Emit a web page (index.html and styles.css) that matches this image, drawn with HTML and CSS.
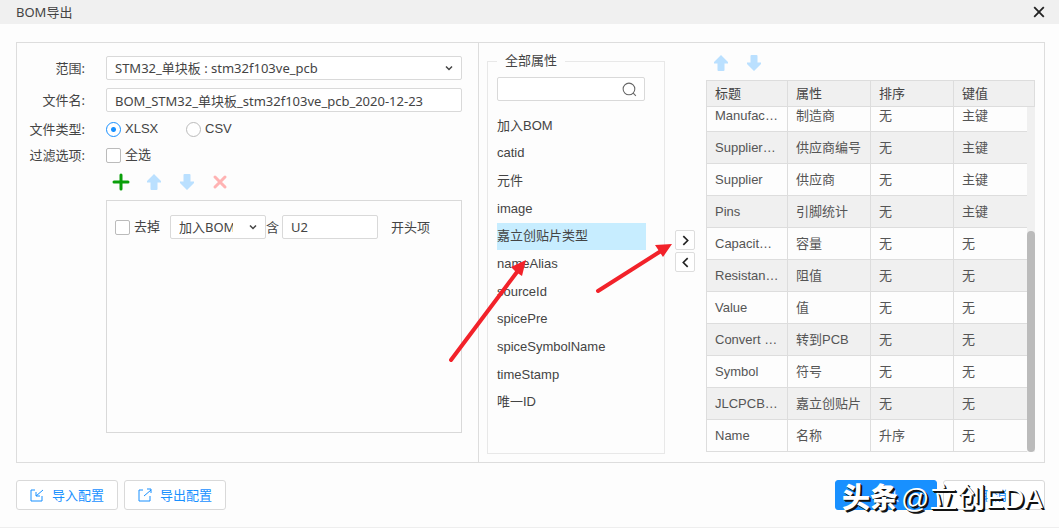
FILE: index.html
```html
<!DOCTYPE html>
<html lang="zh-CN">
<head>
<meta charset="utf-8">
<meta name="viewport" content="width=device-width, initial-scale=1">
<title>BOM导出</title>
<link rel="stylesheet" href="styles.css">
</head>
<body>
<svg class="defs" aria-hidden="true">
  <symbol id="up" viewBox="0 0 16 16"><path d="M8 0 L15 7 V8.500 H11.500 V15 Q11.500 16 10.500 16 H5.500 Q4.500 16 4.500 15 V8.500 H1 V7 Z"/></symbol>
  <symbol id="down" viewBox="0 0 16 16"><path d="M8 16 L15 9 V7.500 H11.500 V1 Q11.500 0 10.500 0 H5.500 Q4.500 0 4.500 1 V7.500 H1 V9 Z"/></symbol>
  <symbol id="chevron" viewBox="0 0 8 8"><path d="M1 2.500 L4 5.500 L7 2.500"/></symbol>
</svg>
<main class="dialog">
  <header class="titlebar">
    <h1 class="title">BOM导出</h1>
    <button class="close" type="button" aria-label="关闭"><svg viewBox="0 0 10 10"><path d="M1 1 L9 9 M9 1 L1 9"/></svg></button>
  </header>

  <div class="panels">
    <section class="panel options">
      <div class="row">
        <label class="label" for="scope">范围:</label>
        <div class="select"><select id="scope"><option>STM32_单块板 : stm32f103ve_pcb</option></select><svg class="chevron"><use href="#chevron"/></svg></div>
      </div>
      <div class="row">
        <label class="label" for="filename">文件名:</label>
        <input class="text" id="filename" type="text" value="BOM_STM32_单块板_stm32f103ve_pcb_2020-12-23">
      </div>
      <div class="row short" role="radiogroup" aria-labelledby="type-label">
        <span class="label" id="type-label">文件类型:</span>
        <div class="choices">
          <label class="choice"><input class="radio" type="radio" name="type" checked>XLSX</label>
          <label class="choice"><input class="radio" type="radio" name="type">CSV</label>
        </div>
      </div>
      <div class="row short">
        <span class="label">过滤选项:</span>
        <label class="choice"><input class="check" type="checkbox">全选</label>
      </div>
      <div class="tools">
        <button class="tool add" type="button" aria-label="添加"><svg viewBox="0 0 18 18"><path d="M9 2 V16 M2 9 H16"/></svg></button>
        <button class="tool move" type="button" aria-label="上移"><svg><use href="#up"/></svg></button>
        <button class="tool move" type="button" aria-label="下移"><svg><use href="#down"/></svg></button>
        <button class="tool remove" type="button" aria-label="删除"><svg viewBox="0 0 18 18"><path d="M4 4 L14 14 M14 4 L4 14"/></svg></button>
      </div>
      <div class="filters">
        <div class="filter">
          <label class="choice"><input class="check" type="checkbox">去掉</label>
          <div class="select field"><select aria-label="属性"><option>加入BOM</option></select><svg class="chevron"><use href="#chevron"/></svg></div>
          <label class="contains" for="prefix">含</label>
          <input class="text prefix" id="prefix" type="text" value="U2">
          <span class="suffix">开头项</span>
        </div>
      </div>
    </section>

    <section class="panel attributes">
      <fieldset class="all">
        <legend>全部属性</legend>
        <div class="search">
          <input class="text" type="search" aria-label="搜索属性">
          <svg viewBox="0 0 16 16"><circle cx="7.500" cy="7.500" r="5.500"/><path d="M11.500 11.500 L14 14"/></svg>
        </div>
        <ul class="list">
          <li>加入BOM</li>
          <li>catid</li>
          <li>元件</li>
          <li>image</li>
          <li class="selected">嘉立创贴片类型</li>
          <li>nameAlias</li>
          <li>sourceId</li>
          <li>spicePre</li>
          <li>spiceSymbolName</li>
          <li>timeStamp</li>
          <li>唯一ID</li>
        </ul>
      </fieldset>

      <div class="transfer">
        <button class="shift" type="button" aria-label="加入"><svg viewBox="0 0 10 10"><path d="M3 1 L7 5 L3 9"/></svg></button>
        <button class="shift" type="button" aria-label="移出"><svg viewBox="0 0 10 10"><path d="M7 1 L3 5 L7 9"/></svg></button>
      </div>

      <div class="chosen">
        <div class="sorting">
          <button class="tool move" type="button" aria-label="上移"><svg><use href="#up"/></svg></button>
          <button class="tool move" type="button" aria-label="下移"><svg><use href="#down"/></svg></button>
        </div>
        <table class="grid head">
          <thead><tr><th>标题</th><th>属性</th><th>排序</th><th>键值</th></tr></thead>
        </table>
        <div class="scroller">
          <table class="grid body">
            <tbody>
              <tr><td>Manufacturer</td><td>制造商</td><td>无</td><td>主键</td></tr>
              <tr><td>SupplierPart</td><td>供应商编号</td><td>无</td><td>主键</td></tr>
              <tr><td>Supplier</td><td>供应商</td><td>无</td><td>主键</td></tr>
              <tr><td>Pins</td><td>引脚统计</td><td>无</td><td>主键</td></tr>
              <tr><td>Capacitance</td><td>容量</td><td>无</td><td>无</td></tr>
              <tr><td>Resistance(Ohm)</td><td>阻值</td><td>无</td><td>无</td></tr>
              <tr><td>Value</td><td>值</td><td>无</td><td>无</td></tr>
              <tr><td>Convert to PCB</td><td>转到PCB</td><td>无</td><td>无</td></tr>
              <tr><td>Symbol</td><td>符号</td><td>无</td><td>无</td></tr>
              <tr><td>JLCPCB Part</td><td>嘉立创贴片</td><td>无</td><td>无</td></tr>
              <tr><td>Name</td><td>名称</td><td>升序</td><td>无</td></tr>
            </tbody>
          </table>
          <div class="track"><div class="thumb"></div></div>
        </div>
      </div>
    </section>
  </div>

  <footer class="actions">
    <button class="button link" type="button"><svg viewBox="0 0 14 14"><path d="M5 2 H1 V13 H12 V8 M13 2 L6 8 M6 4 V8 H10"/></svg>导入配置</button>
    <button class="button link" type="button"><svg viewBox="0 0 14 14"><path d="M5 2 H1 V13 H12 V8 M6 8 L13 2 M9 1 H13 V5"/></svg>导出配置</button>
    <button class="button primary" type="button">确认</button>
    <button class="button link" type="button">取消</button>
  </footer>

  <svg class="pointers" viewBox="0 0 230 130" aria-hidden="true">
    <path class="shaft" d="M11 120 L77 32 M158 51 L221 11"/>
    <path class="tip" d="M86 20 L71 27 L76 32 L82 36 Z M232 4 L215 5 L219 11 L223 17 Z"/>
  </svg>
  <div class="watermark"><strong>头条</strong><span>@立创EDA</span></div>
</main>
</body>
</html>
```
FILE: styles.css
```css
* { box-sizing: border-box; }

body {
  margin: 0;
  background: #fff;
  color: #444;
  font: 13px/20px "Noto Sans", "Noto Sans CJK SC", sans-serif;
}

button, input, select { font: inherit; color: inherit; margin: 0; }
button { padding: 0; cursor: pointer; }
svg { fill: none; stroke: none; }
.defs { position: absolute; width: 0; height: 0; }

.dialog {
  position: relative;
  min-height: 528px;
  background: #fdfdfd;
  border-bottom: 1px solid #eee;
}

.titlebar {
  display: flex;
  align-items: center;
  justify-content: space-between;
  height: 24px;
  padding: 0 14px 0 16px;
  background: #f0f0f0;
}
.title { margin: 0; font-size: 13px; font-weight: 400; }
.close { display: flex; border: 0; background: none; }
.close svg { width: 12px; height: 12px; stroke: #222; stroke-width: 1.5; }

.panels {
  display: grid;
  grid-template-columns: 462fr 565fr;
  margin: 18px 14px 0 16px;
  border: 1px solid #ddd;
}
.panel { min-width: 0; height: 419px; }

.options { padding: 13px 16px 0 0; border-right: 1px solid #ddd; }
.row {
  display: grid;
  grid-template-columns: 68px 1fr;
  column-gap: 21px;
  align-items: center;
  height: 24px;
  margin-bottom: 8px;
}
.row.short { height: 26px; margin: 0; }
.row:nth-child(2) { margin-bottom: 4px; }
.label { text-align: right; white-space: nowrap; }

.text, .select select {
  width: 100%;
  min-width: 0;
  height: 24px;
  padding: 0 8px;
  border: 1px solid #d9d9d9;
  border-radius: 2px;
  background: #fff;
  appearance: none;
  outline: 0;
}
.select { display: grid; align-items: center; }
.select > * { grid-area: 1 / 1; }
.select select { padding-right: 32px; }
.chevron {
  justify-self: end;
  width: 8px;
  height: 8px;
  margin-right: 9px;
  stroke: #444;
  stroke-width: 1.5;
  pointer-events: none;
}

.choices { display: grid; grid-template-columns: 80px 1fr; }
.choice {
  display: flex;
  align-items: center;
  gap: 4px;
  font-family: "Liberation Sans", "Noto Sans CJK SC", sans-serif;
  white-space: nowrap;
}
.radio, .check {
  flex: none;
  width: 15px;
  height: 15px;
  appearance: none;
  background: #fff;
  border: 1px solid #bbb;
}
.radio { border-radius: 50%; }
.radio:checked {
  border-color: #1890ff;
  background: radial-gradient(circle, #1890ff 2px, #fff 3px);
}
.check { border-radius: 2px; }

.tools { display: flex; gap: 15px; margin: 5px 0 0 95px; }
.tool { display: flex; border: 0; background: none; }
.tool svg { width: 18px; height: 18px; }
.move svg { padding: 1px; fill: #bae0ff; }
.add svg { stroke: #0a9f0a; stroke-width: 3; stroke-linecap: round; }
.remove svg { stroke: #ffb3b3; stroke-width: 3; stroke-linecap: round; }

.filters {
  height: 233px;
  margin: 9px 0 0 89px;
  padding: 14px 8px;
  border: 1px solid #d9d9d9;
}
.filter { display: flex; align-items: center; white-space: nowrap; }
.filter .field { width: 96px; margin-left: 10px; }
.contains { width: 16px; }
.filter .prefix { width: 96px; }
.suffix { margin-left: 13px; }

.attributes {
  display: grid;
  grid-template-columns: 178px 20px 1fr;
  column-gap: 10px;
  padding: 8px 9px 0 8px;
  font-family: "Liberation Sans", "Noto Sans CJK SC", sans-serif;
}
.all {
  min-width: 0;
  height: 403px;
  margin: 0;
  padding: 6px 18px 0 9px;
  border: 1px solid #e8e8e8;
}
.all legend { padding: 0 8px; }
.search { display: grid; align-items: center; width: 148px; }
.search > * { grid-area: 1 / 1; }
.search svg {
  justify-self: end;
  width: 17px;
  height: 17px;
  margin-right: 7px;
  stroke: #666;
  pointer-events: none;
}
.list {
  display: grid;
  grid-auto-rows: 1fr;
  align-items: stretch;
  width: 149px;
  height: 304px;
  margin: 11px 0 0;
  padding: 0;
  list-style: none;
}
.list li { display: flex; align-items: center; }
.selected { background: #c7edff; }

.transfer { display: grid; gap: 2px; align-content: start; padding-top: 179px; }
.shift {
  display: grid;
  place-items: center;
  height: 20px;
  background: #fff;
  border: 1px solid #ddd;
  border-radius: 2px;
}
.shift svg { width: 11px; height: 11px; stroke: #222; stroke-width: 1.5; }

.chosen { min-width: 0; padding-left: 1px; }
.sorting { display: flex; gap: 15px; padding: 3px 0 8px 6px; }
.grid { width: 100%; table-layout: fixed; border-collapse: collapse; }
.head { background: #f0f0f0; }
.grid th, .grid td {
  overflow: hidden;
  padding: 0 8px;
  border: 1px solid #ddd;
  text-align: left;
  font-weight: 400;
  white-space: nowrap;
  text-overflow: ellipsis;
}
.grid th { height: 26px; }
.grid td { height: 32px; color: #555; }
.grid th:nth-child(1), .grid td:nth-child(1) { width: 81px; }
.grid th:nth-child(2), .grid td:nth-child(2),
.grid th:nth-child(3), .grid td:nth-child(3) { width: 83px; }
.grid td:last-child { border-right: 0; }
.body tr:nth-child(even) { background: #f0f0f0; }
.scroller {
  display: grid;
  grid-template-columns: 1fr 8px;
  grid-template-rows: 100%;
  align-items: end;
  height: 345px;
  overflow: hidden;
}
.track { display: flex; align-items: end; height: 100%; background: #f0f0f0; }
.thumb { width: 100%; height: 221px; border-radius: 4px; background: #bbb; }

.actions { display: flex; gap: 6px; margin: 17px 14px 0 16px; }
.button {
  display: flex;
  align-items: center;
  justify-content: center;
  gap: 8px;
  width: 102px;
  height: 30px;
  border: 1px solid #d9d9d9;
  border-radius: 3px;
  background: #fff;
}
.link { color: #1890ff; }
.button svg { width: 14px; height: 14px; stroke: #1890ff; }
.primary { margin-left: auto; background: #1890ff; border-color: #1890ff; color: #fff; }

.pointers {
  position: absolute;
  left: 440px;
  top: 240px;
  width: 230px;
  height: 130px;
  overflow: visible;
  pointer-events: none;
}
.shaft { stroke: #f2222a; stroke-width: 4; stroke-linecap: round; }
.tip { fill: #f2222a; }

.watermark {
  position: absolute;
  display: flex;
  gap: 3px;
  right: 16px;
  bottom: 10px;
  color: #fff;
  font: 28px/36px "Liberation Sans", "Noto Sans CJK SC", sans-serif;
  white-space: nowrap;
  text-shadow: 1px 1px 0 #111, 2px 2px 0 #111;
  pointer-events: none;
}
.watermark strong { font-weight: 900; }
```
